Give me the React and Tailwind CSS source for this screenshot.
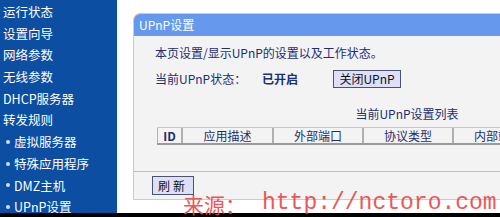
import React from "react";

const cjk = { fontFamily: '"Noto Sans CJK SC", "Liberation Sans", sans-serif' };

function Side() {
  const top = ["运行状态", "设置向导", "网络参数", "无线参数", "DHCP服务器", "转发规则"];
  const sub = ["虚拟服务器", "特殊应用程序", "DMZ主机", "UPnP设置"];
  return (
    <nav className="w-[117px] shrink-0 bg-[#0b4ea2] text-white text-[12.5px] pt-[1px]" style={cjk}>
      {top.map((t) => (
        <div key={t} className="h-[21.7px] leading-[21.7px] pl-[3px] whitespace-nowrap">{t}</div>
      ))}
      {sub.map((t) => (
        <div key={t} className="h-[21.7px] leading-[21.7px] pl-[6px] flex items-center gap-[4px] whitespace-nowrap">
          <span className="w-[4px] h-[4px] rounded-full bg-[#cfe0ff]" />
          <span>{t}</span>
        </div>
      ))}
    </nav>
  );
}

function Btn({ children, className = "" }) {
  return (
    <div className={"bg-[#dde0f8] border border-[#4a5470] text-[#111] text-[12px] flex items-center justify-center " + className}>
      {children}
    </div>
  );
}

function Panel() {
  const cols = [
    ["ID", "w-[25px]"],
    ["应用描述", "w-[91px]"],
    ["外部端口", "w-[90px]"],
    ["协议类型", "w-[90px]"],
    ["内部端口", "w-[90px]"],
    ["IP地址", "w-[90px]"],
  ];
  return (
    <div className="w-[420px] h-[187px] rounded-tl-[7px] border border-[#f2c58e] bg-[#f3f3f3] flex flex-col overflow-hidden text-[#1c2f70] text-[12px]" style={cjk}>
      <div className="h-[22px] bg-[#6699ee] text-white pl-[5px] leading-[22px] shrink-0">UPnP设置</div>
      <div className="flex flex-col pl-[21px] h-[136px] border-b border-[#f0b070]">
        <div className="mt-[10px] leading-[14px]">本页设置/显示UPnP的设置以及工作状态。</div>
        <div className="mt-[10px] flex items-center h-[18px]">
          <span className="w-[107px]">当前UPnP状态：</span>
          <span className="w-[71px] font-bold">已开启</span>
          <Btn className="w-[68px] h-[18px]">关闭UPnP</Btn>
        </div>
        <div className="w-[500px] ml-[2px] mt-[19px] text-center leading-[14px]">当前UPnP设置列表</div>
        <div className="ml-[2px] mt-[6px] flex h-[18px] border-t border-[#c8c8c8] border-b-2 border-b-[#9a9a9a] w-[500px]">
          {cols.map(([c, w]) => (
            <div key={c} className={w + " shrink-0 border-l border-r border-[#b0b0b0] flex items-center justify-center leading-none " + (c === "ID" ? "font-bold" : "")}>
              {c}
            </div>
          ))}
        </div>
      </div>
      <div className="pl-[18px] pt-[4px]">
        <Btn className="w-[42px] h-[19px] tracking-[3px]">刷新</Btn>
      </div>
    </div>
  );
}

export default function App() {
  return (
    <div className="w-[500px] h-[217px] bg-white relative overflow-hidden flex flex-col">
      <div className="flex h-[213px] overflow-hidden">
        <Side />
        <div className="pl-[16px] pt-[13px] overflow-hidden">
          <Panel />
        </div>
      </div>
      <div className="h-[4px] bg-black" />
      <div className="absolute left-[183px] top-[192px] flex items-end text-[#e84848] opacity-90 whitespace-nowrap leading-none">
        <span className="text-[21px] leading-none" style={cjk}>来源：</span>
        <span className="text-[23px] ml-[16px] leading-none" style={{ fontFamily: '"Liberation Mono", monospace' }}>http://nctoro.com</span>
      </div>
    </div>
  );
}
